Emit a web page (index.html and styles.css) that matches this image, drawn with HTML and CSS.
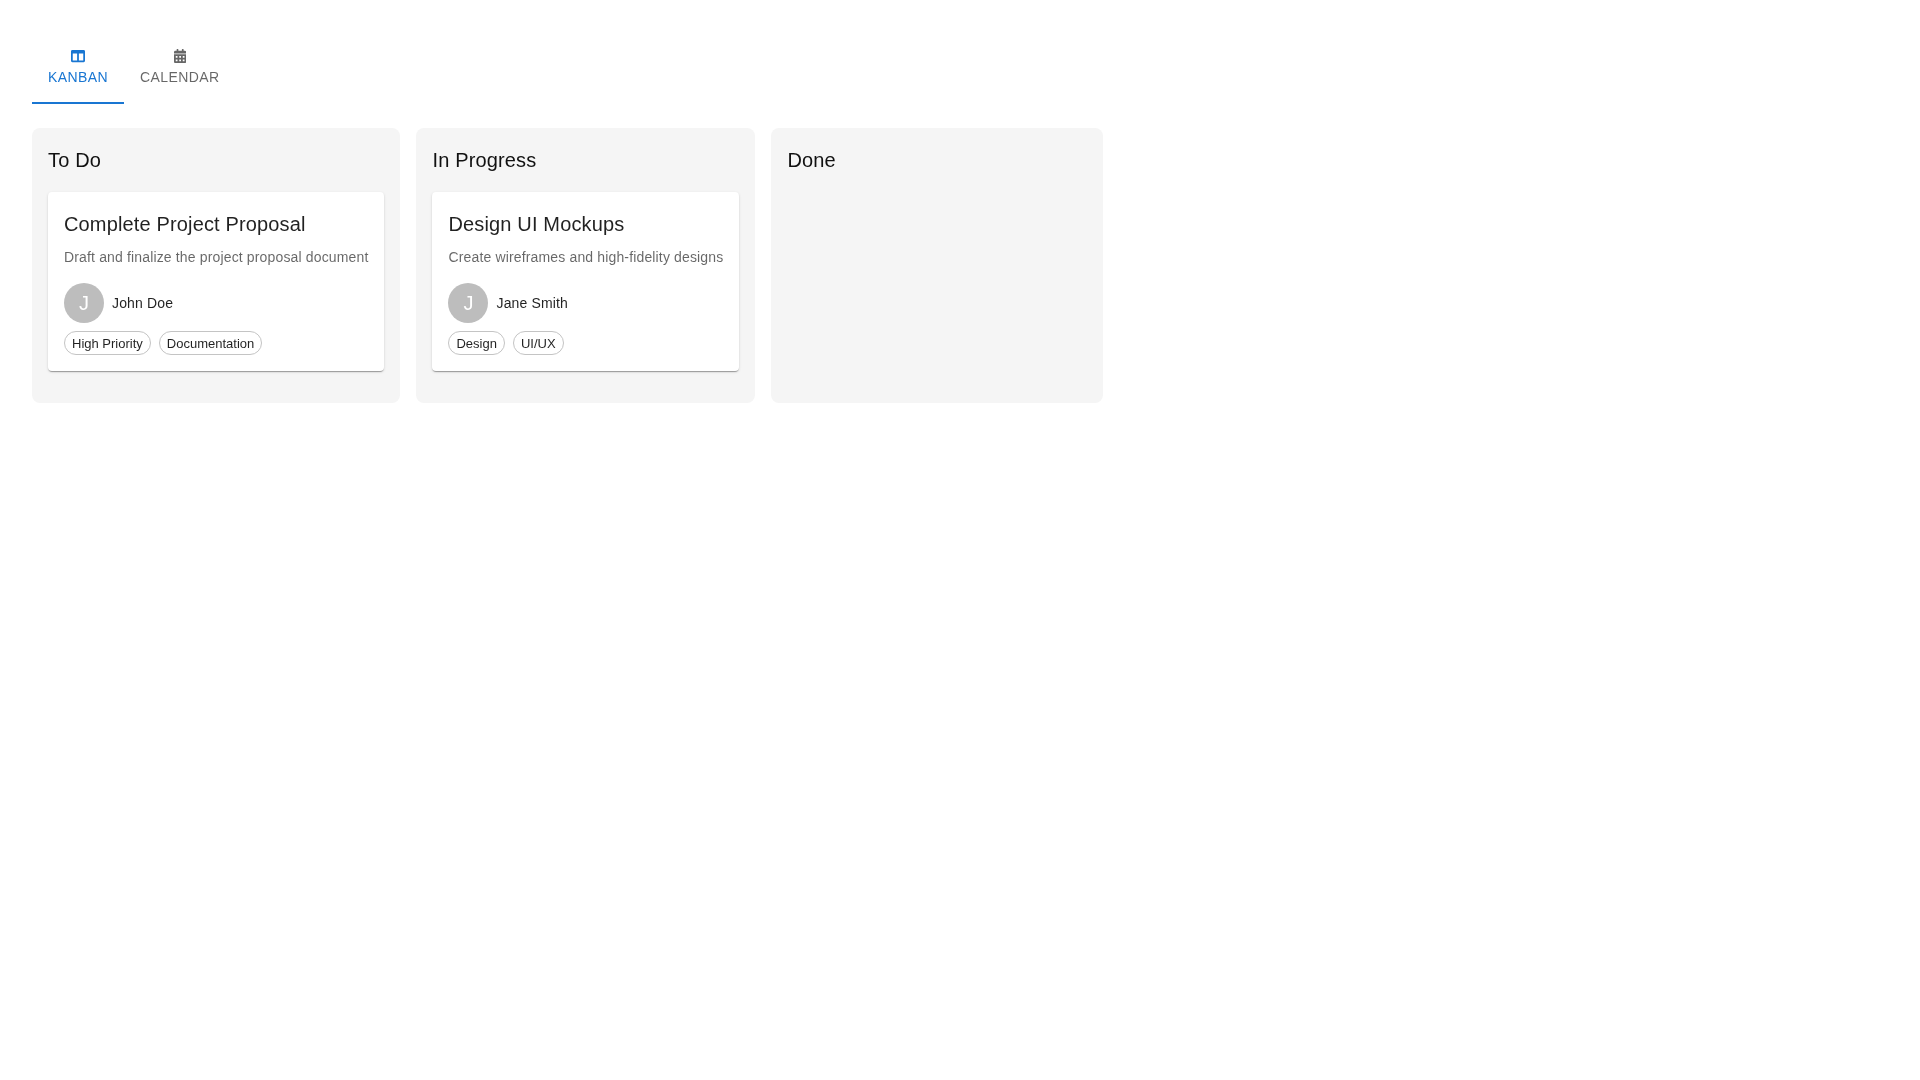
FILE: index.html
```html
<!DOCTYPE html>
<html lang="en">
<head>
<meta charset="utf-8">
<title>Task Board</title>
<link rel="stylesheet" href="styles.css">
</head>
<body>
<div class="page">
  <nav class="tabs">
    <button class="tab tab-active">
      <svg class="tab-icon" viewBox="0 0 512 512" fill="currentColor"><path d="M464 32H48C21.49 32 0 53.49 0 80v352c0 26.51 21.49 48 48 48h416c26.51 0 48-21.49 48-48V80c0-26.51-21.49-48-48-48zM224 416H64V160h160v256zm224 0H288V160h160v256z"/></svg>
      <span>Kanban</span>
    </button>
    <button class="tab">
      <svg class="tab-icon" viewBox="0 0 448 512" fill="currentColor"><path d="M0 464c0 26.5 21.5 48 48 48h352c26.5 0 48-21.5 48-48V192H0v272zm320-196c0-6.6 5.4-12 12-12h40c6.6 0 12 5.4 12 12v40c0 6.6-5.4 12-12 12h-40c-6.6 0-12-5.4-12-12v-40zm0 128c0-6.6 5.4-12 12-12h40c6.6 0 12 5.4 12 12v40c0 6.6-5.4 12-12 12h-40c-6.6 0-12-5.4-12-12v-40zM192 268c0-6.6 5.4-12 12-12h40c6.6 0 12 5.4 12 12v40c0 6.6-5.4 12-12 12h-40c-6.6 0-12-5.4-12-12v-40zm0 128c0-6.6 5.4-12 12-12h40c6.6 0 12 5.4 12 12v40c0 6.6-5.4 12-12 12h-40c-6.6 0-12-5.4-12-12v-40zM64 268c0-6.6 5.4-12 12-12h40c6.6 0 12 5.4 12 12v40c0 6.6-5.4 12-12 12H76c-6.6 0-12-5.4-12-12v-40zm0 128c0-6.6 5.4-12 12-12h40c6.6 0 12 5.4 12 12v40c0 6.6-5.4 12-12 12H76c-6.6 0-12-5.4-12-12v-40zM400 64h-48V16c0-8.8-7.2-16-16-16h-32c-8.8 0-16 7.2-16 16v48H160V16c0-8.8-7.2-16-16-16h-32c-8.8 0-16 7.2-16 16v48H48C21.5 64 0 85.5 0 112v48h448v-48c0-26.5-21.5-48-48-48z"/></svg>
      <span>Calendar</span>
    </button>
  </nav>
  <main class="board">
    <section class="column">
      <h2 class="column-title">To Do</h2>
      <article class="card">
        <h3 class="card-title">Complete Project Proposal</h3>
        <p class="card-desc">Draft and finalize the project proposal document</p>
        <div class="assignee"><div class="avatar">J</div><span class="assignee-name">John Doe</span></div>
        <div class="chips"><span class="chip">High Priority</span><span class="chip">Documentation</span></div>
      </article>
    </section>
    <section class="column">
      <h2 class="column-title">In Progress</h2>
      <article class="card">
        <h3 class="card-title">Design UI Mockups</h3>
        <p class="card-desc">Create wireframes and high-fidelity designs</p>
        <div class="assignee"><div class="avatar">J</div><span class="assignee-name">Jane Smith</span></div>
        <div class="chips"><span class="chip">Design</span><span class="chip">UI/UX</span></div>
      </article>
    </section>
    <section class="column column-empty">
      <h2 class="column-title">Done</h2>
    </section>
  </main>
</div>
</body>
</html>
```

FILE: styles.css
```css
* { box-sizing: border-box; }
html, body { margin: 0; padding: 0; }
body {
  background: #fff;
  color: rgba(0, 0, 0, 0.87);
  font-family: "Liberation Sans", Arial, sans-serif;
}
.page { padding: 32px; will-change: transform; }
.tabs { display: flex; margin-bottom: 24px; }
.tab {
  position: relative;
  display: flex;
  flex-direction: column;
  align-items: center;
  justify-content: center;
  min-height: 72px;
  padding: 9px 16px;
  border: 0;
  background: none;
  color: rgba(0, 0, 0, 0.6);
  font-family: inherit;
  font-size: 14px;
  font-weight: 400;
  line-height: 1.25;
  letter-spacing: 0.4px;
  text-transform: uppercase;
}
.tab-active { color: #1976d2; }
.tab-active::after {
  content: "";
  position: absolute;
  left: 0;
  right: 0;
  bottom: 0;
  height: 2px;
  background: #1976d2;
}
.tab-icon { height: 14px; width: auto; margin-bottom: 6px; }
.board { display: flex; gap: 16px; align-items: stretch; }
.column {
  flex: none;
  padding: 16px;
  border-radius: 8px;
  background: #f5f5f5;
}
.column-empty { width: 332px; }
.column-title {
  margin: 0 0 16px;
  color: #111;
  font-size: 20px;
  font-weight: 400;
  line-height: 1.6;
  letter-spacing: 0.15px;
}
.card {
  margin-bottom: 16px;
  padding: 16px;
  border-radius: 4px;
  background: #fff;
  box-shadow: 0 2px 1px -1px rgba(0,0,0,.2), 0 1px 1px 0 rgba(0,0,0,.14), 0 1px 3px 0 rgba(0,0,0,.12);
}
.card-title {
  margin: 0 0 7px;
  font-size: 20px;
  font-weight: 400;
  line-height: 1.6;
  letter-spacing: 0.15px;
}
.card-desc {
  margin: 0 0 16px;
  color: rgba(0, 0, 0, 0.6);
  font-size: 14px;
  line-height: 1.43;
  letter-spacing: 0.15px;
}
.assignee { display: flex; align-items: center; gap: 8px; margin-bottom: 8px; }
.avatar {
  display: flex;
  align-items: center;
  justify-content: center;
  width: 40px;
  height: 40px;
  border-radius: 50%;
  background: #bdbdbd;
  color: #fff;
  font-size: 20px;
}
.assignee-name { font-size: 14px; line-height: 1.43; letter-spacing: 0.15px; }
.chips { display: flex; gap: 8px; }
.chip {
  display: inline-flex;
  align-items: center;
  height: 24px;
  padding: 0 7px;
  border: 1px solid #c4c4c4;
  border-radius: 12px;
  font-size: 13px;
}
```
